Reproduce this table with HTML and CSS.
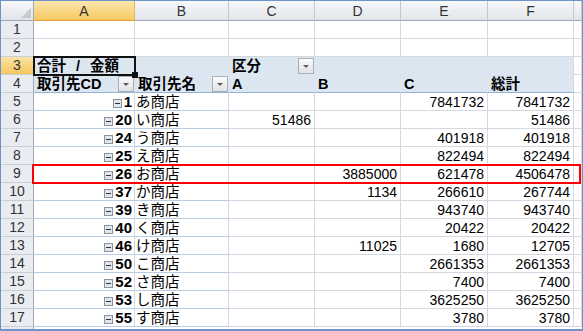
FILE: index.html
```html
<!DOCTYPE html>
<html lang="ja">
<head>
<meta charset="utf-8">
<title>ピボットテーブル</title>
<link rel="stylesheet" href="styles.css">
</head>
<body>
<div class="frame">
<div class="sheet">
  <div class="ch corner"><svg class="tri" width="10" height="10" viewBox="0 0 10 10"><path d="M10 0V10H0Z" fill="#c4cad2"/></svg></div>
  <div class="ch sel">A</div><div class="ch">B</div><div class="ch">C</div><div class="ch">D</div><div class="ch">E</div><div class="ch">F</div><div class="ch"></div>

  <div class="rh">1</div><div></div><div></div><div></div><div></div><div></div><div></div><div></div>
  <div class="rh">2</div><div></div><div></div><div></div><div></div><div></div><div></div><div></div>

  <div class="rh sel">3</div>
  <div class="pv sum">合計 / 金額</div><div class="pv"></div>
  <div class="pv">区分<span class="dd"></span></div>
  <div class="pv"></div><div class="pv"></div><div class="pv last"></div><div></div>

  <div class="rh">4</div>
  <div class="pv r4">取引先CD<span class="dd"></span></div>
  <div class="pv r4">取引先名<span class="dd"></span></div>
  <div class="pv r4">A</div><div class="pv r4">B</div><div class="pv r4">C</div><div class="pv r4 last">総計</div><div></div>

  <div class="rh">5</div><div class="k"><svg class="tg" width="9" height="9" viewBox="0 0 9 9"><rect x=".5" y=".5" width="8" height="8" fill="#e2e6eb" stroke="#8693a6"/><path d="M2 4.5h5" stroke="#333"/></svg>1</div><div class="n">あ商店</div><div></div><div></div><div class="v">7841732</div><div class="v">7841732</div><div></div>
  <div class="rh">6</div><div class="k"><svg class="tg" width="9" height="9" viewBox="0 0 9 9"><rect x=".5" y=".5" width="8" height="8" fill="#e2e6eb" stroke="#8693a6"/><path d="M2 4.5h5" stroke="#333"/></svg>20</div><div class="n">い商店</div><div class="v">51486</div><div></div><div></div><div class="v">51486</div><div></div>
  <div class="rh">7</div><div class="k"><svg class="tg" width="9" height="9" viewBox="0 0 9 9"><rect x=".5" y=".5" width="8" height="8" fill="#e2e6eb" stroke="#8693a6"/><path d="M2 4.5h5" stroke="#333"/></svg>24</div><div class="n">う商店</div><div></div><div></div><div class="v">401918</div><div class="v">401918</div><div></div>
  <div class="rh">8</div><div class="k"><svg class="tg" width="9" height="9" viewBox="0 0 9 9"><rect x=".5" y=".5" width="8" height="8" fill="#e2e6eb" stroke="#8693a6"/><path d="M2 4.5h5" stroke="#333"/></svg>25</div><div class="n">え商店</div><div></div><div></div><div class="v">822494</div><div class="v">822494</div><div></div>
  <div class="rh">9</div><div class="k"><svg class="tg" width="9" height="9" viewBox="0 0 9 9"><rect x=".5" y=".5" width="8" height="8" fill="#e2e6eb" stroke="#8693a6"/><path d="M2 4.5h5" stroke="#333"/></svg>26</div><div class="n">お商店</div><div></div><div class="v">3885000</div><div class="v">621478</div><div class="v">4506478</div><div></div>
  <div class="rh">10</div><div class="k"><svg class="tg" width="9" height="9" viewBox="0 0 9 9"><rect x=".5" y=".5" width="8" height="8" fill="#e2e6eb" stroke="#8693a6"/><path d="M2 4.5h5" stroke="#333"/></svg>37</div><div class="n">か商店</div><div></div><div class="v">1134</div><div class="v">266610</div><div class="v">267744</div><div></div>
  <div class="rh">11</div><div class="k"><svg class="tg" width="9" height="9" viewBox="0 0 9 9"><rect x=".5" y=".5" width="8" height="8" fill="#e2e6eb" stroke="#8693a6"/><path d="M2 4.5h5" stroke="#333"/></svg>39</div><div class="n">き商店</div><div></div><div></div><div class="v">943740</div><div class="v">943740</div><div></div>
  <div class="rh">12</div><div class="k"><svg class="tg" width="9" height="9" viewBox="0 0 9 9"><rect x=".5" y=".5" width="8" height="8" fill="#e2e6eb" stroke="#8693a6"/><path d="M2 4.5h5" stroke="#333"/></svg>40</div><div class="n">く商店</div><div></div><div></div><div class="v">20422</div><div class="v">20422</div><div></div>
  <div class="rh">13</div><div class="k"><svg class="tg" width="9" height="9" viewBox="0 0 9 9"><rect x=".5" y=".5" width="8" height="8" fill="#e2e6eb" stroke="#8693a6"/><path d="M2 4.5h5" stroke="#333"/></svg>46</div><div class="n">け商店</div><div></div><div class="v">11025</div><div class="v">1680</div><div class="v">12705</div><div></div>
  <div class="rh">14</div><div class="k"><svg class="tg" width="9" height="9" viewBox="0 0 9 9"><rect x=".5" y=".5" width="8" height="8" fill="#e2e6eb" stroke="#8693a6"/><path d="M2 4.5h5" stroke="#333"/></svg>50</div><div class="n">こ商店</div><div></div><div></div><div class="v">2661353</div><div class="v">2661353</div><div></div>
  <div class="rh">15</div><div class="k"><svg class="tg" width="9" height="9" viewBox="0 0 9 9"><rect x=".5" y=".5" width="8" height="8" fill="#e2e6eb" stroke="#8693a6"/><path d="M2 4.5h5" stroke="#333"/></svg>52</div><div class="n">さ商店</div><div></div><div></div><div class="v">7400</div><div class="v">7400</div><div></div>
  <div class="rh">16</div><div class="k"><svg class="tg" width="9" height="9" viewBox="0 0 9 9"><rect x=".5" y=".5" width="8" height="8" fill="#e2e6eb" stroke="#8693a6"/><path d="M2 4.5h5" stroke="#333"/></svg>53</div><div class="n">し商店</div><div></div><div></div><div class="v">3625250</div><div class="v">3625250</div><div></div>
  <div class="rh">17</div><div class="k"><svg class="tg" width="9" height="9" viewBox="0 0 9 9"><rect x=".5" y=".5" width="8" height="8" fill="#e2e6eb" stroke="#8693a6"/><path d="M2 4.5h5" stroke="#333"/></svg>55</div><div class="n">す商店</div><div></div><div></div><div class="v">3780</div><div class="v">3780</div><div></div>

  <span class="ov selbox"><span class="handle"></span></span>
  <span class="ov redbox"></span>
</div>
</div>
</body>
</html>
```

FILE: styles.css
```css
html, body {
  margin: 0;
  padding: 0;
  background: #fff;
}

body {
  font-family: "Liberation Sans", "Noto Sans CJK JP", sans-serif;
  font-size: 14.5px;
  color: #000;
}

.frame {
  width: 583px;
  height: 331px;
  box-sizing: border-box;
  border: 1px solid #6f93c8;
  border-bottom-width: 2px;
}

.sheet {
  position: relative;
  height: 100%;
  display: grid;
  grid-template-columns: 33px 101px 94px 86px 86px 87px 86px 1fr;
  grid-template-rows: 20px repeat(17, 18px) 1fr;
  background: linear-gradient(to right, #e9edf2 32px, #9ba9ba 32px, #9ba9ba 33px, #fff 33px);
}

.sheet > div {
  box-sizing: border-box;
  border-right: 1px solid #d5d8de;
  border-bottom: 1px solid #d5d8de;
  display: flex;
  align-items: flex-end;
  line-height: 16px;
  white-space: nowrap;
  overflow: hidden;
  background-color: #fff;
}

/* column headers */
.sheet > .ch {
  align-items: center;
  justify-content: center;
  background: linear-gradient(#f7f8fa, #e1e5ea);
  border-right-color: #c3cad3;
  border-bottom-color: #9ba9ba;
  color: #333;
  font-size: 14px;
}

.sheet > .ch.sel {
  background: linear-gradient(#fbe7b0, #f6c85f);
  border-bottom-color: #f09a35;
  border-right-color: #e3b45a;
}

.sheet > .corner {
  justify-content: flex-end;
  align-items: flex-end;
  border-right-color: #9ba9ba;
}

.tri {
  display: block;
  margin: 0 2px 2px 0;
}

/* row headers */
.sheet > .rh {
  justify-content: center;
  background: #e9edf2;
  border-right-color: #9ba9ba;
  border-bottom-color: #c9cfd7;
  color: #333;
  font-size: 14px;
  padding-bottom: 1px;
}

.sheet > .rh.sel {
  background: linear-gradient(#fbe3a4, #f5c65e);
  border-right-color: #f09a35;
}

/* pivot header area */
.sheet > .pv {
  background: #dce6f1;
  border-right-color: #dce6f1;
  border-bottom-color: #dce6f1;
  font-weight: bold;
  padding-left: 3px;
  justify-content: space-between;
}

.sheet > .sum {
  word-spacing: 6px;
}

.sheet > .pv.r4 {
  border-bottom-color: #95b3d7;
}

.sheet > .pv.last {
  border-right-color: #d5d8de;
}

.dd {
  width: 16px;
  height: 16px;
  box-sizing: border-box;
  flex: none;
  border: 1px solid #a9b0ba;
  background: linear-gradient(#fbfbfb, #dfe2e6);
  display: flex;
  align-items: center;
  justify-content: center;
}

.dd::after {
  content: "";
  width: 0;
  height: 0;
  border-left: 3px solid transparent;
  border-right: 3px solid transparent;
  border-top: 3px solid #5a5a5a;
  margin-top: 1px;
}

/* row labels */
.sheet > .k {
  justify-content: flex-end;
  font-weight: bold;
  font-size: 15px;
  padding-right: 2px;
  border-bottom-color: #b8cce4;
}

.tg {
  display: block;
  flex: none;
  margin: 0 2px 2px 0;
}

.sheet > .n {
  padding-left: 1px;
  border-bottom-color: #b8cce4;
}

/* values */
.sheet > .v {
  justify-content: flex-end;
  padding-right: 3px;
  font-size: 14px;
}

/* overlays */
.ov {
  position: absolute;
  display: block;
  box-sizing: border-box;
  pointer-events: none;
}

.selbox {
  left: 32px;
  top: 55px;
  width: 103px;
  height: 20px;
  border: 2px solid #111;
}

.handle {
  position: absolute;
  right: -4px;
  bottom: -4px;
  width: 6px;
  height: 6px;
  background: #111;
}

.redbox {
  left: 31px;
  top: 163px;
  width: 549px;
  height: 20px;
  border: 2px solid #f00;
}
```
